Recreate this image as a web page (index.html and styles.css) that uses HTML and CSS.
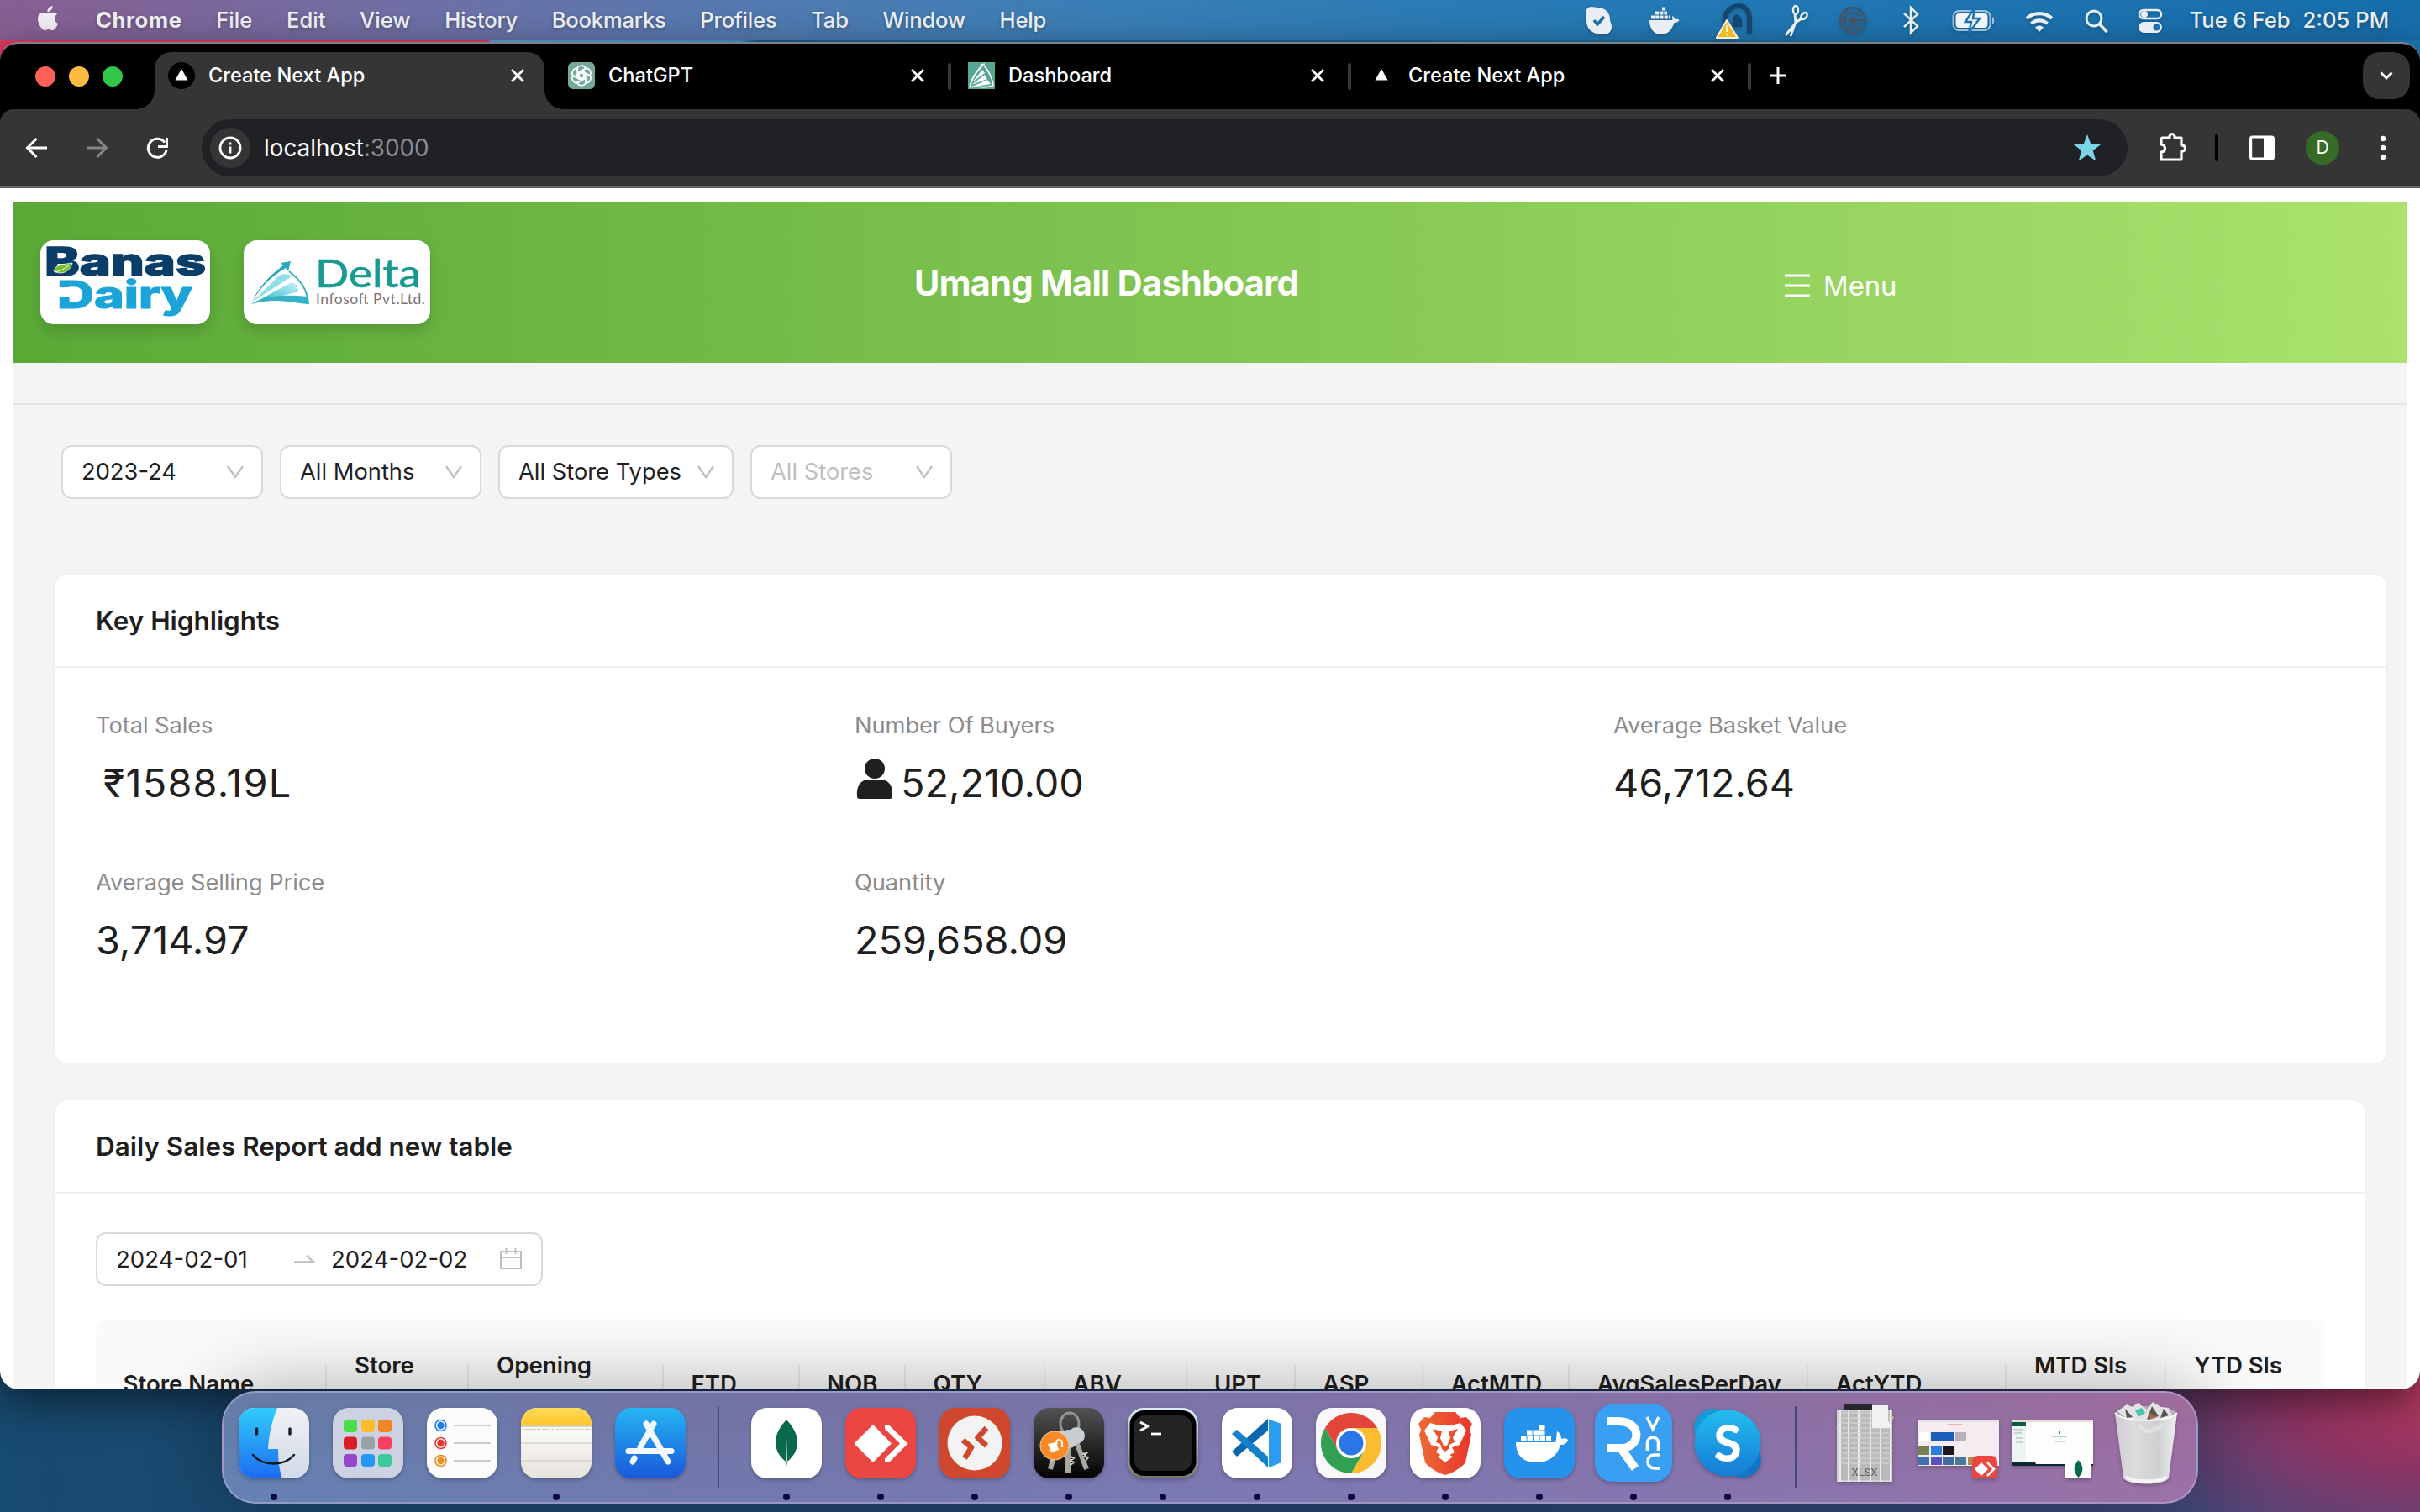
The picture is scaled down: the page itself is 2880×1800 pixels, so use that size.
FILE: index.html
```html
<!DOCTYPE html>
<html lang="en">
<head>
<meta charset="utf-8">
<title>Create Next App</title>
<link rel="stylesheet" href="styles.css">
</head>
<body>
<div class="desktop">
  <header class="menubar">
    <svg class="apple" viewBox="0 0 28 32" width="28" height="32"><path fill="#f3eef5" d="M19.5 1c.2 2-.6 3.800-1.700 5.100-1.100 1.300-2.800 2.200-4.400 2.100-.2-1.900.7-3.800 1.700-5C16.300 1.900 18.100 1.100 19.500 1zM25 11c-1.900 1.200-3.100 3-3 5.300 0 2.700 1.600 4.800 4 5.800-.5 1.600-1.300 3.200-2.400 4.700-1.100 1.600-2.300 3.200-4.200 3.200s-2.500-1.100-4.700-1.100-2.900 1.100-4.700 1.100-3-1.500-4.300-3.300C3.800 23.900 2 19.900 2 16.500 2 11.700 5.200 9 8.500 9c1.900 0 3.500 1.200 4.700 1.200S16.700 8.800 19 8.800c1.700 0 4.300.4 6 2.200z"/></svg>
    <nav class="menus">
      <b>Chrome</b><span>File</span><span>Edit</span><span>View</span><span>History</span><span>Bookmarks</span><span>Profiles</span><span>Tab</span><span>Window</span><span>Help</span>
    </nav>
    <div class="status">
      <svg class="s1" viewBox="0 0 40 40" width="40" height="40"><path fill="#e9eff5" d="M11 4c3 0 5 1 7 1 9 0 15 6 15 14 0 3 2 5 2 9 0 5-4 9-9 9-3 0-4-1-7-1C11 36 5 29 5 21c0-3-1-5-1-9 0-5 3-8 7-8z"/><path d="M14 20l4 5 8-9" fill="none" stroke="#1c6ea9" stroke-width="3.500"/></svg>
      <svg class="s2" viewBox="0 0 40 40" width="40" height="40"><path fill="#e9eff5" d="M2 20h27c1-1 0-3 0-5 2 1 3 2 3.500 4 2-.4 4 0 5 1-1 2-3 3-6 3-3 9-8 14-16 14C7 37 2 30 2 20z"/><path d="M4 16.500h23M9 11.500h14M17 6.500h5" stroke="#e9eff5" stroke-width="4" stroke-dasharray="4.200 1"/></svg>
      <svg class="s3" viewBox="0 0 52 44" width="52" height="44"><path d="M16 26C12 3 45-4 45 20v18" fill="none" stroke="#14476f" stroke-width="6"/><path d="M25 30c-3-19 11-18 11-6v6z" fill="#14476f"/><path d="M18 22L31 43H6z" fill="#f0b928" stroke="#fbf4dd" stroke-width="2" stroke-linejoin="round"/><path d="M18.500 28v8m0 2v2" stroke="#fff7d5" stroke-width="2.500"/></svg>
      <svg class="s4" viewBox="0 0 40 40" width="40" height="40"><g fill="none" stroke="#e9eff5" stroke-width="2.500"><path d="M22 21L8 38M20 22l-6 17M20 24L19 13M20 23l7-5" stroke-width="2.800"/><ellipse cx="20" cy="8" rx="3" ry="5"/><ellipse cx="30" cy="15" rx="3" ry="4.500" transform="rotate(40 30 15)"/></g></svg>
      <svg class="s5" viewBox="0 0 40 40" width="40" height="40"><g fill="none" stroke="#48535f" stroke-width="2.300"><circle cx="20" cy="20" r="15"/><path d="M28 15a9.500 9.500 0 1 0 0 10M5 20h6M20 20h15"/></g><circle cx="20" cy="20" r="4.500" fill="#48535f"/></svg>
      <svg class="s6" viewBox="0 0 30 40" width="30" height="40"><path d="M7 12l16 15-8 8V5l8 8L7 28" fill="none" stroke="#e9eff5" stroke-width="2.400"/></svg>
      <svg class="s7" viewBox="0 0 52 40" width="52" height="40"><rect x="1.500" y="9" width="44" height="23" rx="7" fill="none" stroke="#9dc1dc" stroke-width="2"/><rect x="4.500" y="12" width="38" height="17" rx="4" fill="#f0f5f9"/><path d="M48 16c3 1 3 8 0 9z" fill="#9dc1dc"/><path d="M27 5L16 22h7l-3 13 13-17h-8z" fill="#f0f5f9" stroke="#1d72b0" stroke-width="2.500"/></svg>
      <svg class="s8" viewBox="0 0 50 40" width="50" height="40"><g fill="none" stroke="#e9eff5" stroke-width="4.200"><path d="M10 18a22 22 0 0 1 30 0M15.500 24a14 14 0 0 1 19 0"/></g><path d="M20 28.500a7 7 0 0 1 10 0L25 34z" fill="#e9eff5"/></svg>
      <svg class="s9" viewBox="0 0 40 40" width="40" height="40"><circle cx="18" cy="18" r="9" fill="none" stroke="#e9eff5" stroke-width="3"/><path d="M24.500 24.500l8 8.500" stroke="#e9eff5" stroke-width="3.500" stroke-linecap="round"/></svg>
      <svg class="s10" viewBox="0 0 40 40" width="40" height="40"><rect x="7" y="8" width="26" height="10" rx="5" fill="none" stroke="#e9eff5" stroke-width="2.500"/><circle cx="13" cy="13" r="4" fill="#e9eff5"/><rect x="6" y="22" width="28" height="13" rx="6.500" fill="#e9eff5"/><circle cx="27.500" cy="28.500" r="4" fill="#1c6fae"/></svg>
      <span class="clock">Tue 6 Feb</span><span class="clock time">2:05 PM</span>
    </div>
  </header>

  <main class="window">
    <div class="tabstrip">
      <div class="lights"><i class="red"></i><i class="yellow"></i><i class="green"></i></div>
      <div class="tab active">
        <svg viewBox="0 0 32 32" width="32" height="32"><circle cx="16" cy="16" r="16" fill="#000"/><path d="M16 8l7.500 13.500h-15z" fill="#fff"/></svg>
        <span>Create Next App</span>
        <svg class="x" viewBox="0 0 24 24" width="24" height="24"><path d="M5 5l14 14M19 5L5 19"/></svg>
      </div>
      <div class="tab">
        <svg viewBox="0 0 32 32" width="32" height="32"><rect width="32" height="32" rx="6" fill="#75a99b"/><g fill="none" stroke="#fff" stroke-width="1.700"><path d="M11 11.500V8.500c0-5 8-6 10-1l-8 4.500v9"/><path d="M11 11.500V8.500c0-5 8-6 10-1l-8 4.500v9" transform="rotate(60 16 16)"/><path d="M11 11.500V8.500c0-5 8-6 10-1l-8 4.500v9" transform="rotate(120 16 16)"/><path d="M11 11.500V8.500c0-5 8-6 10-1l-8 4.500v9" transform="rotate(180 16 16)"/><path d="M11 11.500V8.500c0-5 8-6 10-1l-8 4.500v9" transform="rotate(240 16 16)"/><path d="M11 11.500V8.500c0-5 8-6 10-1l-8 4.500v9" transform="rotate(300 16 16)"/></g></svg>
        <span>ChatGPT</span>
        <svg class="x" viewBox="0 0 24 24" width="24" height="24"><path d="M5 5l14 14M19 5L5 19"/></svg>
      </div>
      <i class="sep"></i>
      <div class="tab">
        <svg viewBox="0 0 32 32" width="32" height="32"><rect width="32" height="32" fill="#57a593"/><path d="M20 2l-4 1 1 1C10 11 4 20 2 30M19 4c6 7 10 15 11 24M2 30c9-3 18 2 28-2" fill="none" stroke="#fff" stroke-width="1.800"/><path d="M5 24L17 9l3 4zM4 27l16-12 3 5zM5 29l18-8 4 5-6 1z" fill="#fff"/></svg>
        <span>Dashboard</span>
        <svg class="x" viewBox="0 0 24 24" width="24" height="24"><path d="M5 5l14 14M19 5L5 19"/></svg>
      </div>
      <i class="sep"></i>
      <div class="tab">
        <svg viewBox="0 0 32 32" width="32" height="32"><path d="M16 8l7.500 13.500h-15z" fill="#fff"/></svg>
        <span>Create Next App</span>
        <svg class="x" viewBox="0 0 24 24" width="24" height="24"><path d="M5 5l14 14M19 5L5 19"/></svg>
      </div>
      <i class="sep"></i>
      <svg class="plus" viewBox="0 0 22 22" width="22" height="22"><path d="M11 1v20M1 11h20" stroke="#fff" stroke-width="3"/></svg>
      <span class="tabsearch"><svg viewBox="0 0 20 20" width="20" height="20"><path d="M3.500 6.500L10 13l6.500-6.500" fill="none" stroke="#fff" stroke-width="3"/></svg></span>
    </div>

    <div class="toolbar">
      <svg class="back" viewBox="0 0 28 28" width="28" height="28"><path d="M27 14H4M14.500 3L3.500 14l11 11" fill="none" stroke="#fff" stroke-width="3"/></svg>
      <svg class="fwd" viewBox="0 0 28 28" width="28" height="28"><path d="M1 14h23M13.500 3l11 11-11 11" fill="none" stroke="#868686" stroke-width="3"/></svg>
      <svg class="reload" viewBox="0 0 28 28" width="28" height="28"><path d="M25 17a11 11 0 1 1-2-9.500" fill="none" stroke="#fff" stroke-width="3"/><path d="M25.500 2v10.500H15" fill="none" stroke="#fff" stroke-width="3"/></svg>
      <div class="omnibox">
        <span class="info"><svg viewBox="0 0 28 28" width="28" height="28"><circle cx="14" cy="14" r="12" fill="none" stroke="#fff" stroke-width="2.800"/><path d="M14 12.500v8M14 7.500v3" stroke="#fff" stroke-width="2.800"/></svg></span>
        <span class="url">localhost<em>:3000</em></span>
        <svg class="star" viewBox="0 0 34 32" width="34" height="32"><path fill="#7ad6e6" d="M17 0l4.200 11.200 12.300.5-9.700 7.500 3.500 12.300L17 24.500 6.700 31.500l3.500-12.300L.5 11.700l12.300-.5z"/></svg>
      </div>
      <svg class="puzzle" viewBox="0 0 34 36" width="34" height="36"><path d="M5 7h8c-1-6 7-6 6 0h8v9c6-1 6 8 0 7v10H3V24c6-.5 6-8 0-9V9a2 2 0 0 1 2-2z" fill="none" stroke="#fff" stroke-width="3.200" stroke-linejoin="round"/></svg>
      <i class="tsep"></i>
      <svg class="panel" viewBox="0 0 30 30" width="30" height="30"><rect x="1.600" y="2" width="26.800" height="26" rx="2" fill="none" stroke="#fff" stroke-width="3.200"/><path d="M17 2h12v26H17z" fill="#fff"/></svg>
      <span class="avatar">D</span>
      <svg class="dots" viewBox="0 0 8 30" width="8" height="30"><g fill="#fff"><circle cx="4" cy="4" r="3.200"/><circle cx="4" cy="15" r="3.200"/><circle cx="4" cy="26" r="3.200"/></g></svg>
    </div>

    <div class="page">
      <div class="banner">
        <svg class="logo" viewBox="0 0 202 100" width="202" height="100"><g font-family="Inter, sans-serif" font-weight="800"><text x="5" y="42" font-size="46" fill="#0a3d68" stroke="#0a3d68" stroke-width="1.500" textLength="192" lengthAdjust="spacingAndGlyphs">Banas</text><text x="20" y="81" font-size="45" fill="#1ca4d8" stroke="#1ca4d8" stroke-width="1" textLength="161" lengthAdjust="spacingAndGlyphs">Dairy</text></g><path fill="#fff" d="M18 56h18v11H18z"/><path fill="#74bf2c" stroke="#fff" stroke-width=".8" d="M16 37c2-9 11-8 22-10-2 10-12 15-22 10z"/><path d="M17 38c6-1 12-4 17-8" stroke="#fff" stroke-width="1" fill="none"/></svg>
        <svg class="logo delta" viewBox="0 0 222 100" width="222" height="100"><defs><linearGradient id="dg" x1="0" y1="1" x2="1" y2="0"><stop offset="0" stop-color="#22b6c6"/><stop offset="1" stop-color="#c8f6fa"/></linearGradient></defs><path d="M56 25l-12 2 3 3C31 42 16 57 9 76c7-15 20-31 41-43l3 4z" fill="#2ba7be"/><path d="M54 37c13 10 22 21 23 39" fill="none" stroke="#35b4c6" stroke-width="2"/><path d="M11 73l31-31c6-3 12-2 15 1z" fill="#8ee0e8"/><path d="M13 74l44-24 6 3 3 8z" fill="url(#dg)"/><path d="M9 76c20-12 42-11 68-9l-1 9c-20-2-40-8-67 0z" fill="#36b3c5"/><text x="85" y="56" font-family="Lato, sans-serif" font-size="46" fill="#189a93" stroke="#189a93" stroke-width=".6" textLength="126" lengthAdjust="spacingAndGlyphs">Delta</text><text x="86" y="76" font-family="Lato, sans-serif" font-size="17.500" fill="#7e7071" textLength="130">Infosoft Pvt.Ltd.</text></svg>
        <h1>Umang Mall Dashboard</h1>
        <div class="menu"><svg viewBox="0 0 30 28" width="30" height="28"><path d="M0 2h30M0 14h30M0 26h30" stroke="#fff" stroke-width="3"/></svg><span>Menu</span></div>
      </div>
      <div class="content">
        <hr>
        <div class="filters">
          <div class="select"><span>2023-24</span><svg viewBox="0 0 22 18" width="22" height="18"><path d="M2 2l9 13 9-13"/></svg></div>
          <div class="select months"><span>All Months</span><svg viewBox="0 0 22 18" width="22" height="18"><path d="M2 2l9 13 9-13"/></svg></div>
          <div class="select wide"><span>All Store Types</span><svg viewBox="0 0 22 18" width="22" height="18"><path d="M2 2l9 13 9-13"/></svg></div>
          <div class="select empty"><span>All Stores</span><svg viewBox="0 0 22 18" width="22" height="18"><path d="M2 2l9 13 9-13"/></svg></div>
        </div>
        <section class="card highlights">
          <h2>Key Highlights</h2>
          <div class="stats">
            <div class="stat"><p>Total Sales</p><strong class="rupee">₹1588.19L</strong></div>
            <div class="stat"><p>Number Of Buyers</p><strong><svg viewBox="0 0 48 52" width="48" height="52"><ellipse cx="24" cy="14" rx="12" ry="12"/><path d="M3 47c-1-12 4-20 14-20 3 0 4 1 7 1s4-1 7-1c10 0 15 8 14 20 0 2-1 3-3 3H6c-2 0-3-1-3-3z"/></svg>52,210.00</strong></div>
            <div class="stat"><p>Average Basket Value</p><strong>46,712.64</strong></div>
            <div class="stat"><p>Average Selling Price</p><strong>3,714.97</strong></div>
            <div class="stat"><p>Quantity</p><strong>259,658.09</strong></div>
          </div>
        </section>
        <section class="card report">
          <h2>Daily Sales Report add new table</h2>
          <div class="range">
            <span class="from">2024-02-01</span>
            <svg class="arrow" viewBox="0 0 26 12" width="26" height="12"><path d="M1 9.500h23L16 1.500" fill="none" stroke="#bfbfbf" stroke-width="2.400"/></svg>
            <span>2024-02-02</span>
            <svg class="cal" viewBox="0 0 28 28" width="28" height="28"><path d="M2 5h24v20H2zM2 12h24M8.500 1v7M19.500 1v7" fill="none" stroke="#bfbfbf" stroke-width="2"/></svg>
          </div>
          <div class="thead">
            <span>Store Name</span><span class="tall">Store</span><span class="tall">Opening</span><span>FTD</span><span>NOB</span><span>QTY</span><span>ABV</span><span>UPT</span><span>ASP</span><span>ActMTD</span><span>AvgSalesPerDay</span><span>ActYTD</span><span class="tall">MTD Sls</span><span class="tall">YTD Sls</span>
          </div>
        </section>
      </div>
    </div>
  </main>

  <footer class="dock">
    <div class="app on"><svg viewBox="0 0 84 84" width="84" height="84"><defs><linearGradient id="fi" x2="0" y2="1"><stop offset="0" stop-color="#30ccfd"/><stop offset="1" stop-color="#1c6cf0"/></linearGradient><linearGradient id="fw" x2="0" y2="1"><stop offset="0" stop-color="#f0f1f4"/><stop offset="1" stop-color="#d0dae8"/></linearGradient></defs><rect width="84" height="84" rx="19" fill="url(#fw)"/><path d="M19 0h27c-6 15-10 31-11 49h12c0 12 1 24 5 35H19A19 19 0 0 1 0 65V19A19 19 0 0 1 19 0z" fill="url(#fi)"/><path d="M21.500 25v6M61 25v6" stroke="#16222e" stroke-width="3.500" stroke-linecap="round"/><path d="M17 56c12 14 37 14 49 0" fill="none" stroke="#10161c" stroke-width="2.500" stroke-linecap="round"/></svg></div>
    <div class="app"><svg viewBox="0 0 84 84" width="84" height="84"><rect width="84" height="84" rx="19" fill="#ccd2e2"/><rect x="13" y="14" width="16" height="15" rx="4" fill="#4bdd4b"/><rect x="34" y="14" width="16" height="15" rx="4" fill="#fdbb2c"/><rect x="54" y="14" width="16" height="15" rx="4" fill="#f38527"/><rect x="13" y="34.500" width="16" height="15" rx="4" fill="#d81e24"/><rect x="34" y="34.500" width="16" height="15" rx="4" fill="#97a1a6"/><rect x="54" y="34.500" width="16" height="15" rx="4" fill="#fb3f60"/><rect x="13" y="55" width="16" height="15" rx="4" fill="#9746cc"/><rect x="34" y="55" width="16" height="15" rx="4" fill="#2498f4"/><rect x="54" y="55" width="16" height="15" rx="4" fill="#3bc99c"/></svg></div>
    <div class="app"><svg viewBox="0 0 84 84" width="84" height="84"><rect width="84" height="84" rx="19" fill="#fcfcfb"/><path d="M32 21h44M32 42h44M32 63h44" stroke="#bababa" stroke-width="1.600"/><g fill="none" stroke-width="1.600"><circle cx="16.500" cy="21" r="6.500" stroke="#1d7cf2"/><circle cx="16.500" cy="42" r="6.500" stroke="#e8352e"/><circle cx="16.500" cy="63" r="6.500" stroke="#e88b1e"/></g><circle cx="16.500" cy="21" r="4.200" fill="#1d7cf2"/><circle cx="16.500" cy="42" r="4.200" fill="#e8352e"/><circle cx="16.500" cy="63" r="4.200" fill="#f08d1e"/></svg></div>
    <div class="app on"><svg viewBox="0 0 84 84" width="84" height="84"><defs><linearGradient id="nt" x2="0" y2="1"><stop offset="0" stop-color="#fedb59"/><stop offset="1" stop-color="#fec52b"/></linearGradient><linearGradient id="np" x2="0" y2="1"><stop offset=".3" stop-color="#faf9f7"/><stop offset="1" stop-color="#e6e2dc"/></linearGradient></defs><rect width="84" height="84" rx="19" fill="url(#np)"/><path d="M0 21.500V19A19 19 0 0 1 19 0h46a19 19 0 0 1 19 19v2.500z" fill="url(#nt)"/><path d="M0 22h84" stroke="#b9b2a0" stroke-width="1"/><path d="M1 25.500h82" stroke="#b5b2ac" stroke-width="1.200" stroke-dasharray="1.500 1.500"/><path d="M0 42h84M0 63h84" stroke="#d5d3cf" stroke-width="1.600"/></svg></div>
    <div class="app"><svg viewBox="0 0 84 84" width="84" height="84"><defs><linearGradient id="as" x2="0" y2="1"><stop offset="0" stop-color="#25b5f2"/><stop offset="1" stop-color="#1a58dc"/></linearGradient></defs><rect width="84" height="84" rx="19" fill="url(#as)"/><g stroke="#f3f8fe" stroke-width="7" stroke-linecap="round"><path d="M46 19L30 47M16 51.500h51M37 19l26 45M23 60l-2 4"/></g></svg></div>
    <i class="dsep"></i>
    <div class="app on"><svg viewBox="0 0 84 84" width="84" height="84"><rect width="84" height="84" rx="19" fill="#fff"/><path d="M42 14c7 8 13 16 13 27 0 10-5 17-12 23l-1 6-1-6c-7-6-12-13-12-23 0-11 6-19 13-27z" fill="#0a684c"/><path d="M42 34l1 30h-2z" fill="#d9efe4"/></svg></div>
    <div class="app on"><svg viewBox="0 0 84 84" width="84" height="84"><rect width="84" height="84" rx="19" fill="#ec4642"/><path d="M33 20l22 22.500L33 65 10.500 42.500z" fill="#fff"/><path d="M47 20.500h5l22.500 22L52 65h-5v-4.500L65 42.500 47 25z" fill="#fff"/></svg></div>
    <div class="app on"><svg viewBox="0 0 84 84" width="84" height="84"><rect width="84" height="84" rx="19" fill="#cf472c"/><circle cx="42" cy="42" r="32.500" fill="#f3f3f3"/><path d="M56 24L45.500 35.500 56 45M28 38.500l10 8.500-8 13" fill="none" stroke="#cf472c" stroke-width="6.500" stroke-linejoin="round"/></svg></div>
    <div class="app on"><svg viewBox="0 0 84 84" width="84" height="84"><defs><linearGradient id="kc" x2="0" y2="1"><stop offset="0" stop-color="#525252"/><stop offset="1" stop-color="#020202"/></linearGradient></defs><rect width="84" height="84" rx="19" fill="url(#kc)"/><ellipse cx="43" cy="19" rx="11" ry="13" fill="none" stroke="#96938d" stroke-width="3"/><g stroke="#aaa79e" stroke-width="6" fill="none"><path d="M31 30L20 73M41 35v42M49 35l14 38"/></g><g fill="#c7cfd2"><circle cx="42" cy="37" r="11"/><circle cx="51" cy="33" r="10"/><circle cx="34" cy="36" r="9"/></g><path d="M23 63l-4 2M44 58l4 2-4 3 4 2-4 3M58 55l5-1-3 4 5 1-3 4" stroke="#d1cec6" stroke-width="2"/><circle cx="25" cy="45" r="17" fill="#fb8926" stroke="#edd0ad" stroke-width="1"/><path d="M17 43l10-2 3 9-9 3z" fill="#fff"/><path d="M28 43c-3-6 5-7 6-2v6" fill="none" stroke="#fff" stroke-width="2"/></svg></div>
    <div class="app on"><svg viewBox="0 0 84 84" width="84" height="84"><defs><linearGradient id="tm" x2="0" y2="1"><stop offset="0" stop-color="#d7eef6"/><stop offset="1" stop-color="#77746e"/></linearGradient></defs><rect width="84" height="84" rx="19" fill="url(#tm)"/><rect x="2.500" y="3" width="79" height="78" rx="17" fill="#000"/><rect x="8" y="9" width="68" height="66" rx="12" fill="#242424"/><path d="M15 17l9 5-9 5" fill="none" stroke="#fff" stroke-width="3"/><path d="M28 31h12" stroke="#fff" stroke-width="2.800"/></svg></div>
    <div class="app on"><svg viewBox="0 0 84 84" width="84" height="84"><rect width="84" height="84" rx="19" fill="#fff"/><path d="M12 52l6 6 37-31V13z" fill="#0b67ab"/><path d="M12 31l6-5 37 32v13z" fill="#1581cb"/><path d="M54 13l17 6v46l-17 7c2-1 2-2 2-4V17c0-2 0-3-2-4z" fill="#2a9df1"/></svg></div>
    <div class="app on"><svg viewBox="0 0 84 84" width="84" height="84"><rect width="84" height="84" rx="19" fill="#f8f8fa"/><path d="M10.800 24A36 36 0 0 1 73.200 24H42v18l-15.600 9z" fill="#e4453a"/><path d="M73.200 24A36 36 0 0 1 42 78l15.600-27L42 42V24z" fill="#fbbc2f"/><path d="M42 78A36 36 0 0 1 10.800 24l15.600 27 15.600-9 15.600 9z" fill="#31a050"/><circle cx="42" cy="42" r="18" fill="#fff"/><circle cx="42" cy="42" r="14.500" fill="#2a76e8"/></svg></div>
    <div class="app on"><svg viewBox="0 0 84 84" width="84" height="84"><defs><linearGradient id="br" x2="1" y2="0"><stop offset="0" stop-color="#ee6a33"/><stop offset="1" stop-color="#e8352c"/></linearGradient></defs><rect width="84" height="84" rx="19" fill="#fff"/><path d="M30 5h24l6 7 7-1 7 8-3 7 2 6-7 33c-4 6-16 13-24 15-8-2-20-9-24-15l-7-33 2-6-3-7 7-8 7 1z" fill="url(#br)"/><path d="M24 18l11 3h14l11-3 7 9-8 17-9 3 3 6-11 6-11-6 3-6-9-3-8-17z" fill="#fff"/><path d="M27 25l11 3-2 8 4 9-9-4 2-6zM57 25l-11 3 2 8-4 9 9-4-2-6zM36 43l6 3 6-3-2 6-4 3-4-3z" fill="#ea4f30"/><path d="M42 53l9 5-9 7-9-7z" fill="#fff"/></svg></div>
    <div class="app on"><svg viewBox="0 0 84 84" width="84" height="84"><rect width="84" height="84" rx="19" fill="#2592ec"/><path d="M14 41h47c2-4 1-9 2-13 4 2 5 5 5 9 3-1 6-1 8 1-1 4-4 6-9 6-4 14-14 21-29 21C22 65 14 56 14 41z" fill="#fff"/><path d="M20 37h36M27 29.500h22M42 23h7" stroke="#fff" stroke-width="6" stroke-dasharray="6.500 1"/></svg></div>
    <div class="app on"><svg class="vnc" viewBox="0 0 92 92" width="92" height="92"><rect width="92" height="92" rx="21" fill="#389ff3"/><g fill="none" stroke="#fff"><path d="M14 20h14c29 0 27 32 3 32H14M31 52l17 24" stroke-width="10"/><g stroke-width="3.600"><path d="M62 15l7 14 7-14M62.500 55v-9c0-9 13-9 13 0v9M77 60h-5c-6 0-9 3-9 8s3 8 9 8h5"/></g></g></svg></div>
    <div class="app on"><svg viewBox="0 0 84 84" width="84" height="84"><defs><linearGradient id="sk" x2="0" y2="1"><stop offset="0" stop-color="#22bdf0"/><stop offset="1" stop-color="#167ad5"/></linearGradient></defs><circle cx="25" cy="24" r="23" fill="#189ad6"/><circle cx="60" cy="61" r="22" fill="#1375c6"/><circle cx="42" cy="42" r="39.500" fill="url(#sk)"/><text x="42" y="64" font-family="Lato, sans-serif" font-weight="900" font-size="60" text-anchor="middle" fill="#fff">S</text></svg></div>
    <i class="dsep"></i>
    <div class="app"><svg viewBox="0 0 84 100" width="84" height="100"><path d="M9 32l8-4v10zM70 14l8 5-6 12z" fill="#eba35c"/><path d="M18 4h34v10H18z" fill="#26262c"/><path d="M10 10h66v86H10z" fill="#d3d3d3"/><path d="M13 12h61v82H13z" fill="#bababa"/><path d="M14 10v86M24 10v86M36 10v86M50 10v86M62 10v86M74 10v86" stroke="#ededed" stroke-width="2"/><path d="M11 14h64M11 20h64M11 26h64M11 32h64M11 38h64M11 44h64M11 50h64M11 56h64M11 62h64M11 68h64M11 74h64" stroke="#d8d8d8" stroke-width="1.200"/><path d="M52 5h19v18l5 9H52z" fill="#f1f1f3"/><text x="43" y="89" font-family="Roboto, sans-serif" font-size="13" text-anchor="middle" fill="#5c5c5c">XLSX</text></svg></div>
    <div class="app"><svg viewBox="0 0 100 84" width="100" height="84"><path d="M2 14h97v55H2z" fill="#f4ecf0"/><path d="M2 14h97v3H2z" fill="#e6e0e8"/><path d="M38 20h17" stroke="#ef7068"/><path d="M4 29h12v10H4z" fill="#fff"/><path d="M18 29h28v11H18z" fill="#1e5fbd"/><path d="M47 29h13v11H47z" fill="#b6b4b9"/><path d="M3 45h13v11H3z" fill="#74804f"/><path d="M18 45h13v11H18z" fill="#2b7cdc"/><path d="M32 45h14v11H32z" fill="#17191e"/><path d="M3 58h13v10H3z" fill="#416fae"/><path d="M18 58h13v10H18z" fill="#5b50c3"/><path d="M32 58h14v10H32z" fill="#416c9c"/><path d="M47 58h13v10H47z" fill="#4b7893"/><path d="M62 58h8v10h-8z" fill="#b58a4f"/><rect x="67" y="57" width="30" height="31" rx="7" fill="#ec4642"/><path d="M78 65l8 8-8 8-8-8z" fill="#fff"/><path d="M85 65l8 8-8 8" fill="none" stroke="#fff" stroke-width="2.500"/></svg></div>
    <div class="app"><svg viewBox="0 0 100 84" width="100" height="84"><path d="M2 15h97v54H2z" fill="#fdfdfd"/><path d="M2 15h97v2H2z" fill="#e8e0d5"/><path d="M2 17h17v5H2z" fill="#0c5a43"/><path d="M2 22h17v42H2z" fill="#edf5f3"/><path d="M5 26h10M5 30h9M7 36h8M7 41h8" stroke="#9ab7ae" stroke-width="1"/><path d="M2 65h28l1 2h68v2H2z" fill="#0d2935"/><path d="M59 27v4" stroke="#1aa562" stroke-width="2"/><path d="M50 34h18" stroke="#62bb91"/><path d="M52 40h15" stroke="#98b7dc"/><rect x="66" y="57" width="31" height="31" rx="7" fill="#fff"/><path d="M81.500 62c7 8 6 14 0 21-6-7-7-13 0-21z" fill="#0a684c"/></svg></div>
    <div class="app"><svg viewBox="0 0 84 104" width="84" height="104"><defs><linearGradient id="tr" x2="1" y2="0"><stop offset="0" stop-color="#cfccd2"/><stop offset=".3" stop-color="#dddcde"/><stop offset=".7" stop-color="#cfd0d2"/><stop offset="1" stop-color="#efeff1"/></linearGradient></defs><ellipse cx="42" cy="17" rx="37" ry="9" fill="#b3afba"/><path d="M8 14l11-8 7 3 6-5 11 8 7-9 10 6 9 1 4 9-14 8H24z" fill="#e2e2e2"/><path d="M17 11l9 10-7 1zM49 8l8 12-14 4zM63 11l6 8-10 3z" fill="#575657"/><path d="M29 13l8-3 4 6-8 5z" fill="#49c4b0"/><path d="M47 16l8 5-9 3z" fill="#a96648"/><path d="M5 16c9 12 65 12 74 0L69 93c-2 10-52 10-54 0z" fill="url(#tr)"/><path d="M5 16c9 12 65 12 74 0" fill="none" stroke="#fff" stroke-width="1.600"/><path d="M18 92c8 7 40 7 48 0" fill="none" stroke="#f5f5f7" stroke-width="4"/><path d="M34 30c7 14 20 6 28 0" fill="none" stroke="#e8e8ea" stroke-width="5" opacity=".6"/></svg></div>
  </footer>
</div>
</body>
</html>
```
FILE: styles.css
```css
* { box-sizing: border-box; }
body { margin: 0; font-family: Inter, "Liberation Sans", sans-serif; color: #1f1f1f; }
svg { display: block; flex: none; }
p, h1, h2 { margin: 0; }

.desktop {
  width: 2880px; height: 1800px; overflow: hidden;
  display: grid; grid-template-rows: 50px 1604px 136px; justify-items: center;
  background:
    linear-gradient(to right, #e23963 0, #e23963 580px, #55a6dc 584px, #4397d0 880px, #1e5f8f 900px, #1f77b2 100%) 0 0 / 100% 70px no-repeat,
    radial-gradient(ellipse 420px 230px at 2900px 1640px, #c23a5f 0, #8e3463 45%, rgba(110, 56, 110, 0) 100%),
    linear-gradient(to right, #174a70 0, #24466e 40%, #2c456f 70%, #494b80 100%);
}

.menubar {
  width: 100%; height: 48px; display: flex; align-items: center; padding-left: 43px;
  background: linear-gradient(to right, #885f92 0, #6b72a8 560px, #4b7cb3 1000px, #3a7fb6 1300px, #2279b5 2000px, #176eac 100%);
  color: #f3f4f8; font-size: 25.600px; font-weight: 500; line-height: 48px;
  text-shadow: 0 2px 4px rgba(0, 0, 0, .25);
}
.apple { margin-top: -5px; }
.menus { display: flex; gap: 40.700px; margin-left: 43px; }
.menus b { font-weight: 700; letter-spacing: .6px; }
.menus span:nth-child(n+5) { letter-spacing: -.200px; }
.status { display: flex; align-items: center; margin-left: auto; padding-right: 37px; }
.status svg { filter: drop-shadow(0 2px 2px rgba(0, 0, 0, .2)); }
.s2 { margin-left: 38px; }
.s3 { margin-left: 36px; }
.s4, .s5 { margin-left: 28px; }
.s6, .s7 { margin-left: 34px; }
.s8 { margin-left: 27px; }
.s9 { margin-left: 22px; }
.s10 { margin-left: 25px; }
.clock { margin-left: 26.500px; white-space: nowrap; }
.time { margin-left: 15px; }

.window {
  width: 100%; height: 1604px; overflow: hidden; display: flex; flex-direction: column;
  background: #000; border-top: 2px solid #7d8288; border-radius: 22px;
  box-shadow: 0 14px 50px rgba(0, 0, 0, .55);
}
.tabstrip { height: 78px; flex: none; display: flex; align-items: flex-start; padding: 10px 12px 0 42px; }
.lights { display: flex; gap: 16px; width: 142px; margin-top: 17px; flex: none; }
.lights i { width: 24px; height: 24px; border-radius: 50%; }
.red { background: #fe5f57; }
.yellow { background: #febb40; }
.green { background: #33c748; }
.tab {
  position: relative; width: 464px; height: 56px; display: flex; align-items: center; gap: 16px; flex: none;
  padding: 0 20px 0 16px; margin-right: 12px; color: #fff; font-size: 23.600px; font-weight: 500; line-height: 56px;
}
.tab span { flex: 1; white-space: nowrap; }
.tab.active { background: #353535; height: 68px; padding-bottom: 12px; border-radius: 20px 20px 0 0; }
.tab.active::before, .tab.active::after { content: ""; position: absolute; bottom: 0; width: 22px; height: 22px; }
.tab.active::before { left: -22px; background: radial-gradient(circle at 0 0, transparent 21.500px, #353535 22px); }
.tab.active::after { right: -22px; background: radial-gradient(circle at 100% 0, transparent 21.500px, #353535 22px); }
.x { fill: none; stroke: #fff; stroke-width: 2.800px; }
.sep { width: 4px; height: 32px; margin: 13px 4px 0 -8px; border-radius: 2px; background: #3a3a3a; flex: none; }
.plus { margin: 17px 0 0 17px; }
.tabsearch {
  width: 56px; height: 56px; margin-left: auto; border-radius: 20px; background: #353535;
  display: flex; align-items: center; justify-content: center;
}

.toolbar {
  height: 94px; flex: none; display: flex; align-items: center; padding: 0 38px 0 29px;
  background: #353535; border-bottom: 2px solid #626262; border-radius: 16px 16px 0 0;
}
.fwd { margin-left: 45px; }
.reload { margin-left: 43px; }
.omnibox {
  width: 2292px; height: 68px; margin-left: 39px; border-radius: 34px; background: #202125;
  display: flex; align-items: center; padding: 0 31px 0 10px; flex: none;
}
.info { width: 48px; height: 48px; border-radius: 50%; background: #353535; display: flex; align-items: center; justify-content: center; }
.url { margin-left: 16px; color: #fff; font-size: 27.800px; line-height: 60px; }
.url em { font-style: normal; color: #8b8c8e; }
.star { margin-left: auto; }
.puzzle { margin: -2px 0 0 37px; }
.tsep { width: 4px; height: 32px; margin: 0 37px 0 33px; border-radius: 2px; background: #000; }
.avatar {
  width: 40px; height: 40px; margin-left: 37px; border-radius: 50%; background: #376a24; color: #fff;
  font-size: 21px; line-height: 40px; text-align: center;
}
.dots { margin-left: 48px; }

.page { flex: 1; min-height: 0; overflow: hidden; background: #fff; padding: 16px 16px 0; }
.banner {
  height: 192px; display: flex; align-items: center; padding-left: 32px;
  background: linear-gradient(to right, #5aa937, #aae26d); color: #fff;
}
.logo { background: #fff; border-radius: 16px; box-shadow: 0 8px 16px rgba(0, 0, 0, .15); }
.delta { margin-left: 40px; }
.banner h1 { margin-left: 576px; width: 1036px; font-size: 41.400px; font-weight: 700; letter-spacing: -.620px; line-height: 60px; padding-top: 2px; }
.menu { display: flex; align-items: center; gap: 16px; font-size: 32.800px; line-height: 60px; padding-top: 8px; }
.content { background: #f4f4f4; padding: 48px 22px 0 48px; height: 1240px; }
.content hr { border: 0; height: 2px; margin: 0 -22px 0 -48px; background: #e4e4e4; }
.filters { display: flex; gap: 20px; padding: 48px 0 0 9px; }
.select {
  width: 240px; height: 64px; display: flex; align-items: center; justify-content: space-between;
  padding: 0 20.500px 0 22px; border: 2px solid #d9d9d9; border-radius: 12px; background: #fff;
  font-size: 27.300px; line-height: 60px; white-space: nowrap;
}
.select svg { fill: none; stroke: #bfbfbf; stroke-width: 2.400px; }
.select.wide { width: 280px; }
.empty { color: #bfbfbf; }
.card { background: #fff; border: 2px solid #f0f0f0; border-radius: 16px; }
.card h2 { height: 111px; padding: 0 48px; border-bottom: 2px solid #f0f0f0; font-size: 31.400px; font-weight: 600; line-height: 110px; }
.highlights { height: 586px; margin-top: 88px; }
.stats { display: grid; grid-template-columns: repeat(3, 903px); grid-auto-rows: 187px; padding: 47px 0 0 48px; }
.stat p { font-size: 27.300px; letter-spacing: -.080px; line-height: 44px; color: #8c8c8c; }
.stat strong { display: flex; align-items: center; height: 76px; margin-top: 8px; font-size: 46.800px; font-weight: 400; line-height: 76px; }
.stat strong svg { fill: #1f1f1f; margin: -10px 7px 0 0; }
.stat .rupee { padding-left: 9px; letter-spacing: 1.200px; }
.report { width: 2752px; margin-top: 40px; height: 600px; }
.range {
  width: 532px; height: 64px; margin: 46px 0 0 48px; display: flex; align-items: center; padding: 0 22px;
  border: 2px solid #d9d9d9; border-radius: 12px; font-size: 27.600px; line-height: 60px;
}
.from { width: 211px; }
.arrow { margin-right: 19px; }
.cal { margin-left: auto; }
.thead {
  width: 2652px; height: 152px; margin: 40px 0 0 48px; border-radius: 16px 16px 0 0; background: #fafafa;
  display: grid; align-items: center; overflow: hidden;
  grid-template-columns: 275px 169px 232px 161.500px 126.500px 166px 168.500px 129px 152.500px 174px 284px 236px 190px 188px;
  font-size: 27.600px; font-weight: 600; line-height: 44px;
}
.thead span { position: relative; padding-left: 32.500px; white-space: nowrap; }
.thead span:nth-child(n+9) { letter-spacing: -.100px; }
.thead .tall { height: 88px; padding-left: 33px; }
.thead span + span::before {
  content: ""; position: absolute; left: -2px; top: calc(50% - 23px); width: 2px; height: 46px; background: rgba(0, 0, 0, .06);
}

.dock {
  position: relative; width: 2352px; height: 134px; margin-top: 2px; padding: 0 4px; display: flex;
  border: 2px solid rgba(190, 185, 225, .5); border-radius: 40px;
  background: linear-gradient(to bottom, rgba(120, 90, 130, .15), rgba(110, 130, 200, .2)), linear-gradient(to right, #6282ae 0, #7277a8 25%, #7e78ae 50%, #8b73a9 75%, #a66ea0 100%);
  box-shadow: 0 0 90px rgba(0, 0, 0, .33);
}
.app { position: relative; width: 112px; height: 130px; flex: none; display: flex; justify-content: center; align-items: center; padding-bottom: 10px; }
.app svg { filter: drop-shadow(0 2px 2px rgba(0, 0, 0, .25)); }
.app.on::after { content: ""; position: absolute; left: 52px; bottom: 2px; width: 8px; height: 8px; border-radius: 50%; background: #0a0540; }
.dsep { width: 2px; height: 98px; margin: 16px 24px 0; background: #494580; flex: none; }
```
